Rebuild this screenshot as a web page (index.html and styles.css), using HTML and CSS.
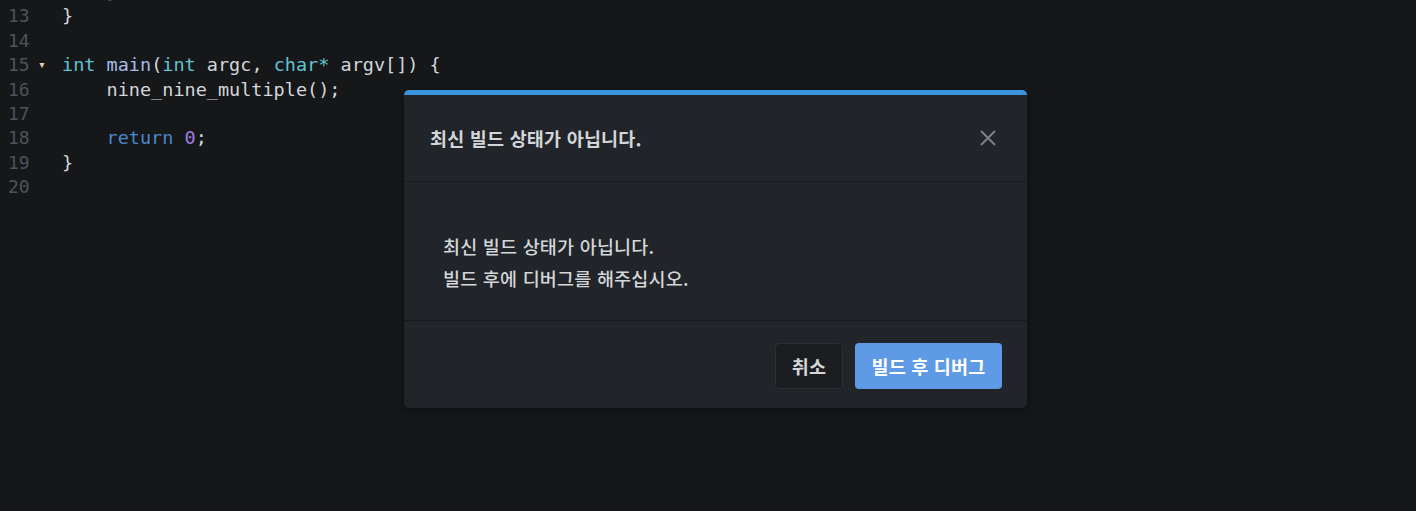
FILE: index.html
```html
<!DOCTYPE html>
<html lang="ko">
<head>
    <meta charset="UTF-8">
    <meta name="viewport" content="width=device-width, initial-scale=1.0">
    <title>Debug</title>
    <link rel="stylesheet" href="styles.css">
</head>
<body>
    <!-- Editor -->
    <div class="editor">
        <div class="line"><span class="num">12</span><span class="fold"></span><span class="code">    }</span></div>
        <div class="line"><span class="num">13</span><span class="fold"></span><span class="code">}</span></div>
        <div class="line"><span class="num">14</span><span class="fold"></span><span class="code"></span></div>
        <div class="line"><span class="num">15</span><span class="fold">&#9662;</span><span class="code"><span class="type">int</span> <span class="fn">main</span>(<span class="type">int</span> argc, <span class="type">char*</span> argv[]) {</span></div>
        <div class="line"><span class="num">16</span><span class="fold"></span><span class="code">    nine_nine_multiple();</span></div>
        <div class="line"><span class="num">17</span><span class="fold"></span><span class="code"></span></div>
        <div class="line"><span class="num">18</span><span class="fold"></span><span class="code">    <span class="kw">return</span> <span class="lit">0</span>;</span></div>
        <div class="line"><span class="num">19</span><span class="fold"></span><span class="code">}</span></div>
        <div class="line"><span class="num">20</span><span class="fold"></span><span class="code"></span></div>
    </div>

    <!-- Modal -->
    <div class="modal">
        <div class="modal-header">
            <h3>최신 빌드 상태가 아닙니다.</h3>
            <button class="close" aria-label="close">
                <svg width="18" height="18" viewBox="0 0 18 18">
                    <path d="M2 2 L16 16 M16 2 L2 16" stroke="#7d8187" stroke-width="2" fill="none"/>
                </svg>
            </button>
        </div>
        <div class="modal-body">
            <p>최신 빌드 상태가 아닙니다.</p>
            <p>빌드 후에 디버그를 해주십시오.</p>
        </div>
        <div class="modal-footer">
            <button class="btn btn-cancel">취소</button>
            <button class="btn btn-primary">빌드 후 디버그</button>
        </div>
    </div>
</body>
</html>
```
FILE: styles.css
```css
/* General */
* {
    margin: 0;
    padding: 0;
    box-sizing: border-box;
}
body {
    background-color: #161719;
    font-family: "Noto Sans CJK KR", sans-serif;
    overflow: hidden;
}

/* Editor */
.editor {
    margin-top: -20px;
    font-family: "DejaVu Sans Mono", monospace;
    font-size: 18.5px;
    color: #d3d6da;
}
.line {
    display: flex;
    height: 24.4px;
    line-height: 24.4px;
    white-space: pre;
}
.num {
    width: 30px;
    padding-left: 8px;
    font-size: 18px;
    color: #4c535c;
}
.fold {
    width: 32px;
    padding-left: 8px;
    font-size: 13px;
    color: #e8cfa8;
}
.type { color: #5ec4d4; }
.fn { color: #a5bde6; }
.kw { color: #4a88cc; }
.lit { color: #a37de3; }

/* Modal */
.modal {
    position: absolute;
    left: 404px;
    top: 90px;
    width: 623px;
    background-color: #212428;
    border-top: 5px solid #3b95dd;
    border-radius: 5px;
    box-shadow: 0 2px 8px rgba(0, 0, 0, 0.4);
    color: #d3d6d9;
}
.modal-header {
    display: flex;
    align-items: center;
    justify-content: space-between;
    height: 87px;
    padding: 0 30px 0 26px;
    border-bottom: 1px solid #17191c;
}
.modal-header h3 {
    font-size: 18.5px;
    font-weight: bold;
    letter-spacing: 0.2px;
}
.close {
    background: none;
    border: none;
    display: flex;
}
.modal-body {
    padding: 48px 39px 26px;
    border-bottom: 1px solid #17191c;
    font-size: 18.5px;
    font-weight: 500;
    letter-spacing: 0.2px;
    line-height: 32px;
}
.modal-footer {
    display: flex;
    justify-content: flex-end;
    gap: 12px;
    padding: 22px 25px 19px;
}
.btn {
    height: 46px;
    border-radius: 4px;
    font-family: "Noto Sans CJK KR", sans-serif;
    font-size: 18.5px;
    font-weight: bold;
    letter-spacing: 0.2px;
    cursor: pointer;
}
.btn-cancel {
    width: 68px;
    background-color: #1b1d20;
    border: 1px solid #2c2f33;
    color: #d3d6d9;
}
.btn-primary {
    width: 147px;
    background-color: #5f9ae6;
    border: none;
    color: #ffffff;
}
```
